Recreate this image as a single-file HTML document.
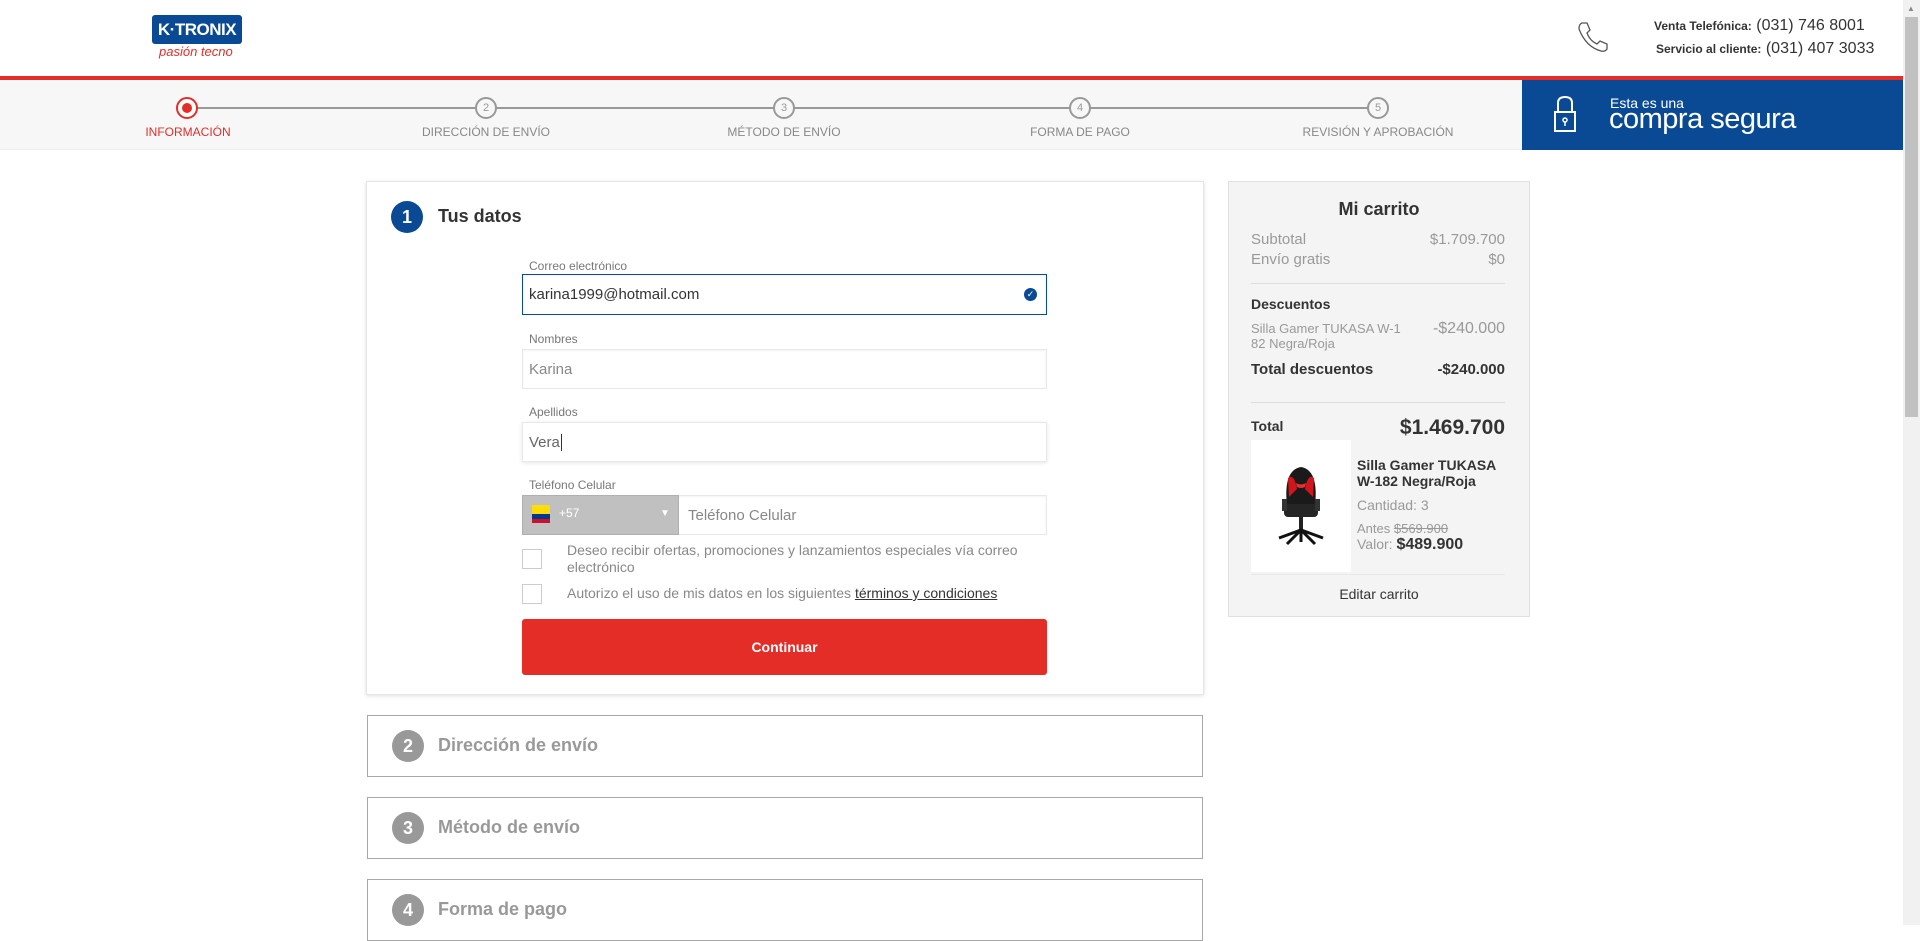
<!DOCTYPE html>
<html><head><meta charset="utf-8"><style>
*{margin:0;padding:0;box-sizing:border-box}
body{width:1920px;height:925px;overflow:hidden;background:#fff;font-family:"Liberation Sans",Arial,sans-serif;color:#333;position:relative}
.a{position:absolute}
.lbl{font-size:12px;color:#777}
.inp{position:absolute;left:522px;width:525px;height:40px;border:1px solid #e8e8e8;box-shadow:inset 0 1px 2px rgba(0,0,0,.05);font-size:15px;color:#666;padding:11px 6px}
.step{position:absolute;width:22px;height:22px;border:2px solid #999;border-radius:50%;background:#f7f7f7;font-size:11px;color:#999;text-align:center;line-height:18px}
.sl{position:absolute;font-size:12px;color:#888;transform:translateX(-50%);white-space:nowrap;top:125px}
.row{position:absolute;left:1251px;width:254px;font-size:14px;color:#999}
.row span{float:right}
.coll{position:absolute;left:367px;width:836px;height:62px;border:1px solid #a8a8a8;background:#fff}
.coll .c{position:absolute;left:24px;top:14px;width:32px;height:32px;border-radius:50%;background:#999;color:#fff;font-weight:bold;font-size:18px;text-align:center;line-height:32px}
.coll .t{position:absolute;left:70px;top:19px;font-size:18px;font-weight:bold;color:#999}
</style></head><body>
<div class="a" style="left:152px;top:15px;width:90px;height:29px;background:#0a4a94;border-radius:3px;color:#fff;font-weight:bold;font-size:17px;text-align:center;line-height:29px;letter-spacing:-0.5px">K·TRONIX</div>
<div class="a" style="left:159px;top:44px;font-size:13px;color:#e52d27;font-style:italic">pasión tecno</div>
<svg class="a" style="left:1576px;top:20px" width="34" height="34" viewBox="0 0 34 34"><path d="M6 3 L11 3 L14 10 L11 13 Q14 21 21 24 L24 21 L31 24 L31 29 Q29 32 25 31 Q10 27 3 9 Q3 4 6 3 Z" fill="none" stroke="#555" stroke-width="1.3"/></svg>
<div class="a" style="left:1654px;top:17px;font-size:16px;color:#333;white-space:nowrap"><b style="font-size:12px">Venta Telefónica:</b> (031) 746 8001</div>
<div class="a" style="left:1656px;top:40px;font-size:16px;color:#333;white-space:nowrap"><b style="font-size:12px">Servicio al cliente:</b> (031) 407 3033</div>
<div class="a" style="left:0;top:76px;width:1903px;height:4px;background:#e52d27"></div>
<div class="a" style="left:0;top:80px;width:1903px;height:70px;background:#f7f7f7;border-bottom:1px solid #eee"></div>
<div class="a" style="left:187px;top:107px;width:1191px;height:2px;background:#999"></div>
<div class="step" style="left:176px;top:97px;border-color:#e52d27;background:#fff"><div style="width:10px;height:10px;border-radius:50%;background:#e52d27;margin:4px auto"></div></div>
<div class="step" style="left:475px;top:97px">2</div>
<div class="step" style="left:773px;top:97px">3</div>
<div class="step" style="left:1069px;top:97px">4</div>
<div class="step" style="left:1367px;top:97px">5</div>
<div class="sl" style="left:188px;color:#e52d27">INFORMACIÓN</div>
<div class="sl" style="left:486px">DIRECCIÓN DE ENVÍO</div>
<div class="sl" style="left:784px">MÉTODO DE ENVÍO</div>
<div class="sl" style="left:1080px">FORMA DE PAGO</div>
<div class="sl" style="left:1378px">REVISIÓN Y APROBACIÓN</div>
<div class="a" style="left:1522px;top:80px;width:381px;height:70px;background:#0a4a94"></div>
<svg class="a" style="left:1552px;top:94px" width="26" height="40" viewBox="0 0 26 40"><path d="M6 18 V9 Q6 3 13 3 Q20 3 20 9 V18" fill="none" stroke="#fff" stroke-width="2"/><rect x="3" y="18" width="20" height="19" fill="none" stroke="#fff" stroke-width="2"/><circle cx="13" cy="26" r="2" fill="none" stroke="#fff" stroke-width="1.5"/><path d="M13 28 V32" stroke="#fff" stroke-width="1.5"/></svg>
<div class="a" style="left:1610px;top:95px;font-size:14px;color:#fff">Esta es una</div>
<div class="a" style="left:1609px;top:103px;font-size:29px;color:#fff;white-space:nowrap;letter-spacing:-0.5px">compra segura</div>
<div class="a" style="left:366px;top:181px;width:838px;height:514px;border:1px solid #e6e6e6;box-shadow:0 1px 4px rgba(0,0,0,.12);background:#fff"></div>
<div class="a" style="left:391px;top:201px;width:32px;height:32px;border-radius:50%;background:#0a4a94;color:#fff;font-weight:bold;font-size:18px;text-align:center;line-height:32px">1</div>
<div class="a" style="left:438px;top:206px;font-size:18px;font-weight:bold;color:#333">Tus datos</div>
<div class="a lbl" style="left:529px;top:259px">Correo electrónico</div>
<div class="inp" style="top:274px;height:41px;border:1px solid #0a4a94;color:#333">karina1999@hotmail.com</div>
<div class="a" style="left:1024px;top:288px;width:13px;height:13px;border-radius:50%;background:#0a4a94;color:#fff;font-size:9px;text-align:center;line-height:13px">✓</div>
<div class="a lbl" style="left:529px;top:332px">Nombres</div>
<div class="inp" style="top:349px;color:#888">Karina</div>
<div class="a lbl" style="left:529px;top:405px">Apellidos</div>
<div class="inp" style="top:422px;box-shadow:0 1px 4px rgba(0,0,0,.1)">Vera<span style="border-left:1px solid #333;margin-left:1px"></span></div>
<div class="a lbl" style="left:529px;top:478px">Teléfono Celular</div>
<div class="inp" style="top:495px;color:#888;padding-left:165px">Teléfono Celular</div>
<div class="a" style="left:522px;top:495px;width:157px;height:40px;background:#c0c0c0;border:1px solid #b0b0b0"></div>
<div class="a" style="left:532px;top:505px;width:18px;height:9px;background:#fcdd09"></div>
<div class="a" style="left:532px;top:514px;width:18px;height:5px;background:#003893"></div>
<div class="a" style="left:532px;top:519px;width:18px;height:4px;background:#ce1126"></div>
<div class="a" style="left:559px;top:506px;font-size:12px;color:#fff">+57</div>
<div class="a" style="left:660px;top:508px;font-size:10px;color:#fff">▼</div>
<div class="a" style="left:522px;top:549px;width:20px;height:20px;border:1px solid #ccc"></div>
<div class="a" style="left:567px;top:542px;width:470px;font-size:14px;color:#888;line-height:17px">Deseo recibir ofertas, promociones y lanzamientos especiales vía correo electrónico</div>
<div class="a" style="left:522px;top:584px;width:20px;height:20px;border:1px solid #ccc"></div>
<div class="a" style="left:567px;top:585px;font-size:14px;color:#888;white-space:nowrap">Autorizo el uso de mis datos en los siguientes <u style="color:#333">términos y condiciones</u></div>
<div class="a" style="left:522px;top:619px;width:525px;height:56px;background:#e52d27;border-radius:3px;color:#fff;font-weight:bold;font-size:14px;text-align:center;line-height:56px">Continuar</div>
<div class="coll" style="top:715px"><div class="c">2</div><div class="t">Dirección de envío</div></div>
<div class="coll" style="top:797px"><div class="c">3</div><div class="t">Método de envío</div></div>
<div class="coll" style="top:879px"><div class="c">4</div><div class="t">Forma de pago</div></div>
<div class="a" style="left:1228px;top:181px;width:302px;height:436px;background:#f4f4f4;border:1px solid #e0e0e0"></div>
<div class="a" style="left:1228px;top:199px;width:302px;text-align:center;font-size:18px;font-weight:bold;color:#333">Mi carrito</div>
<div class="row" style="top:231px;font-size:15px">Subtotal<span>$1.709.700</span></div>
<div class="row" style="top:251px;font-size:15px">Envío gratis<span>$0</span></div>
<div class="a" style="left:1251px;top:283px;width:254px;height:1px;background:#ddd"></div>
<div class="row" style="top:296px;color:#333;font-weight:bold">Descuentos</div>
<div class="row" style="top:321px;font-size:13px;line-height:15px"><span style="font-size:16px">-$240.000</span>Silla Gamer TUKASA W-1<br>82 Negra/Roja</div>
<div class="row" style="top:361px;color:#333;font-weight:bold;font-size:15px">Total descuentos<span>-$240.000</span></div>
<div class="a" style="left:1251px;top:402px;width:254px;height:1px;background:#ddd"></div>
<div class="row" style="top:418px;color:#333;font-weight:bold">Total<span style="font-size:21px;margin-top:-2px">$1.469.700</span></div>
<div class="a" style="left:1251px;top:440px;width:100px;height:132px;background:#fff"></div>
<svg class="a" style="left:1276px;top:462px" width="50" height="90" viewBox="0 0 50 90"><path d="M11 44 Q7 8 25 5 Q43 8 39 44 Z" fill="#1a1a1a"/><path d="M12 16 Q18 11 21 27 L13 35 Z M38 16 Q32 11 29 27 L37 35Z" fill="#d0161c"/><path d="M20 21 Q25 24 30 21 L29 25 Q25 27 21 25Z" fill="#e83030"/><rect x="8" y="42" width="34" height="13" rx="4" fill="#252525"/><rect x="6" y="37" width="5" height="12" fill="#333"/><rect x="39" y="37" width="5" height="12" fill="#333"/><rect x="23" y="55" width="4" height="13" fill="#222"/><path d="M3 76 L25 68 L47 76 M25 68 L25 80 M11 82 L25 68 L39 82" stroke="#111" stroke-width="3" fill="none"/></svg>
<div class="a" style="left:1357px;top:457px;width:150px;font-size:14px;font-weight:bold;color:#333;line-height:16px">Silla Gamer TUKASA W-182 Negra/Roja</div>
<div class="a" style="left:1357px;top:497px;font-size:14px;color:#999">Cantidad: 3</div>
<div class="a" style="left:1357px;top:521px;font-size:13px;color:#999">Antes <s>$569.900</s></div>
<div class="a" style="left:1357px;top:536px;font-size:14px;color:#999">Valor: <b style="color:#333;font-size:16px">$489.900</b></div>
<div class="a" style="left:1251px;top:574px;width:254px;height:1px;background:#e8e8e8"></div>
<div class="a" style="left:1228px;top:586px;width:302px;text-align:center;font-size:14px;color:#333">Editar carrito</div>
<div class="a" style="left:1903px;top:0;width:17px;height:925px;background:#f1f1f1"></div>
<div class="a" style="left:1905px;top:17px;width:13px;height:400px;background:#c1c1c1"></div>
<div class="a" style="left:1907px;top:4px;font-size:8px;color:#888">▲</div>
</body></html>
